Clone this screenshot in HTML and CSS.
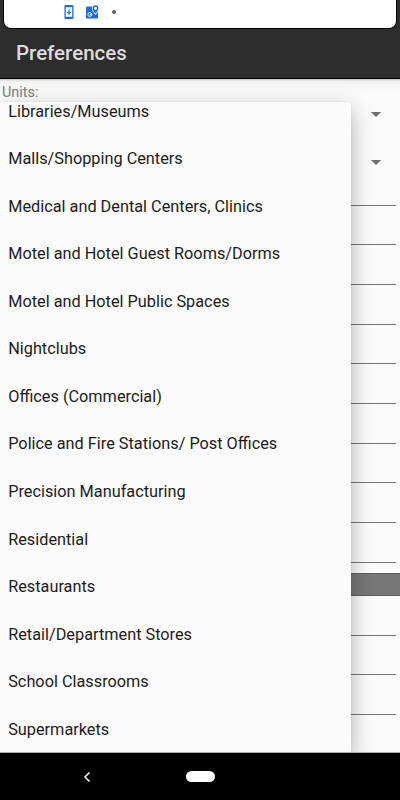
FILE: index.html
```
<!DOCTYPE html>
<html lang="en">
<head>
  <meta charset="UTF-8">
  <title>Preferences</title>
  <meta name="viewport" content="width=device-width, initial-scale=1.0">
  <link rel="stylesheet" href="styles.css">
</head>
<body>

  <div class="status-bar">
    <div class="status-panel">
      <svg class="icon-download" width="10" height="14" viewBox="0 0 10 14">
        <rect x=".5" width="9" height="14" rx="1" fill="#1a6be8"/>
        <rect x="1.8" y="2.2" width="6.4" height="9.6" fill="#fff"/>
        <path d="M5 4.5V9M3.2 7.2L5 9l1.8-1.8" fill="none" stroke="#1a6be8" stroke-width="1.1"/>
      </svg>
      <svg class="icon-map" width="14" height="14" viewBox="0 0 14 14">
        <path d="M1 1.5h5.5l5.500 5.500v5.500q0 1-1 1H1q-1 0-1-1v-10q0-1 1-1z" fill="#1a6be8"/>
        <circle cx="3.8" cy="9.5" r="1.9" fill="none" stroke="#fff" stroke-width="1"/>
        <path d="M3.8 9.5h2" stroke="#fff" stroke-width=".8"/>
        <path d="M9.5 9C7.600 7 6.600 5.200 6.600 3.300a2.900 2.900 0 0 1 5.800 0c0 1.900-1 3.700-2.900 5.700z" fill="#1a6be8" stroke="#fff" stroke-width="1.400"/>
        <path d="M9.5 8.5C7.6 6.6 6.6 5 6.6 3.2a2.900 2.900 0 0 1 5.800 0c0 1.800-1 3.400-2.900 5.300z" fill="#1a6be8"/>
        <circle cx="9.5" cy="3.2" r="1.5" fill="#fff"/>
      </svg>
      <span class="dot"></span>
    </div>
  </div>

  <header class="app-bar">
    <h1>Preferences</h1>
  </header>

  <main class="content">
    <label class="label">Units:</label>
    <div class="spinner"><span class="arrow"></span></div>
    <div class="spinner"><span class="arrow"></span></div>

    <div class="fields first">
      <div class="field"></div>
      <div class="field"></div>
      <div class="field"></div>
      <div class="field"></div>
      <div class="field"></div>
      <div class="field"></div>
      <div class="field"></div>
      <div class="field"></div>
      <div class="field"></div>
      <div class="field"></div>
    </div>
    <div class="section"></div>
    <div class="fields">
      <div class="field"></div>
      <div class="field"></div>
      <div class="field"></div>
    </div>

    <ul class="dropdown">
      <li>Libraries/Museums</li>
      <li>Malls/Shopping Centers</li>
      <li>Medical and Dental Centers, Clinics</li>
      <li>Motel and Hotel Guest Rooms/Dorms</li>
      <li>Motel and Hotel Public Spaces</li>
      <li>Nightclubs</li>
      <li>Offices (Commercial)</li>
      <li>Police and Fire Stations/ Post Offices</li>
      <li>Precision Manufacturing</li>
      <li>Residential</li>
      <li>Restaurants</li>
      <li>Retail/Department Stores</li>
      <li>School Classrooms</li>
      <li>Supermarkets</li>
    </ul>
  </main>

  <nav class="nav-bar">
    <svg class="back" width="8" height="12" viewBox="0 0 8 12">
      <path d="M6.5 1.5L2 6l4.5 4.5" fill="none" stroke="#fff" stroke-width="1.5"/>
    </svg>
    <span class="home"></span>
  </nav>

</body>
</html>
```

FILE: styles.css
```
* {
  box-sizing: border-box;
}
body {
  margin: 0;
  height: 800px;
  display: flex;
  flex-direction: column;
  overflow: hidden;
  background: #fafafa;
  font-family: Roboto, Arial, sans-serif;
}

/* system status bar */
.status-bar {
  height: 29px;
  flex: none;
  padding: 0 4px;
  background: #2d2d2d;
}
.status-panel {
  height: 28px;
  display: flex;
  align-items: center;
  padding: 0 0 4px 60px;
  background: #fff;
  border-radius: 0 0 7px 7px;
  box-shadow: 0 0 0 1px #000;
}
.icon-map {
  margin-left: 12px;
}
.dot {
  width: 4px;
  height: 4px;
  margin-left: 12px;
  border-radius: 50%;
  background: #5f6368;
}

.app-bar {
  height: 50px;
  flex: none;
  display: flex;
  align-items: center;
  padding: 0 16px 2px;
  background: #2d2d2d;
  border-bottom: 1px solid #000;
}
.app-bar h1 {
  margin: 0;
  font-size: 20.5px;
  font-weight: 500;
  color: #dcdcdc;
}

.content {
  position: relative;
  height: 674px;
  flex: none;
  overflow: hidden;
  background: linear-gradient(#c4c4c4, #eee 2px, #f5f5f5 5px, #fafafa 16px);
  border-bottom: 1px solid #aaa;
}
.label {
  display: block;
  height: 12px;
  padding: 6px 2px 0;
  line-height: 16px;
  font-size: 14.4px;
  color: #7c7c7c;
}
.spinner {
  height: 47.4px;
  display: flex;
  align-items: center;
  justify-content: flex-end;
  padding-right: 19.5px;
}
.arrow {
  border: 5px solid transparent;
  border-top-color: #6c6c6c;
  border-bottom-width: 0;
}
.fields {
  padding-right: 4px;
}
.fields.first {
  margin-top: -19.7px;
}
.field {
  height: 39.67px;
  border-bottom: 1px solid #757575;
}
.section {
  height: 23px;
  margin-top: 10.5px;
  background: #777;
  border-top: 1px solid #5c5c5c;
  border-bottom: 1px solid #5c5c5c;
}

/* open spinner list, drawn over the form */
.dropdown {
  position: absolute;
  top: 23px;
  left: 0;
  width: 351px;
  height: 651px;
  margin: 0;
  padding: 0;
  overflow: hidden;
  list-style: none;
  background: #fafafa;
  border-radius: 2px 2px 0 0;
  box-shadow: 0 8px 22px rgba(0, 0, 0, .3), 0 0 2px rgba(0, 0, 0, .1);
}
.dropdown li {
  height: 47.55px;
  padding-left: 8.2px;
  line-height: 47.55px;
  font-size: 16.3px;
  color: #1c1c1c;
}
.dropdown li:first-child {
  margin-top: -14.4px;
}

/* system navigation */
.nav-bar {
  height: 47px;
  flex: none;
  display: flex;
  align-items: center;
  padding-left: 83px;
  background: #000;
}
.home {
  width: 29px;
  height: 11px;
  margin-left: 95px;
  border-radius: 6px;
  background: #fff;
}
```
